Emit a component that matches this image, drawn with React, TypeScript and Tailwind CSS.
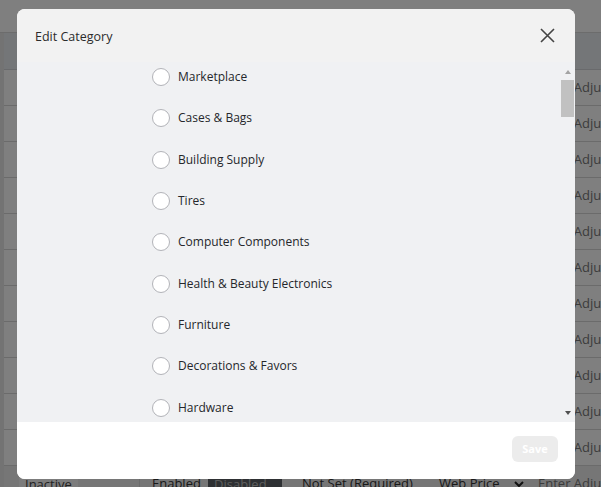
const categories = [
  'Marketplace',
  'Cases & Bags',
  'Building Supply',
  'Tires',
  'Computer Components',
  'Health & Beauty Electronics',
  'Furniture',
  'Decorations & Favors',
  'Hardware',
  'Toys & Games',
];

function TableRow({ last }: { last?: boolean }) {
  return (
    <div
      className={
        'flex h-[36px] items-center border-b border-[#d6d6d6] text-[13px] text-[#555] ' +
        (last ? 'bg-[#ececec]' : 'bg-white')
      }
    >
      <div className="flex h-full w-[136px] shrink-0 items-center border-r border-[#d6d6d6] pl-[15px]">
        <span className="rounded-sm bg-[#f8f8f8] px-[6px] leading-[20px] text-[#444]">Inactive</span>
      </div>
      <div className="flex w-[162px] shrink-0 items-center pl-[12px]">
        <span className="w-[56px] text-[#333]">Enabled</span>
        <span className="w-[74px] bg-[#5c6166] px-[6px] leading-[22px] text-[#bbb]">Disabled</span>
      </div>
      <div className="w-[137px] shrink-0 text-[#333]">Not Set (Required)</div>
      <div className="flex w-[99px] shrink-0 items-center pr-[13px]">
        <span className="text-[#333]">Web Price</span>
        <svg className="ml-auto" width="12" height="12" viewBox="0 0 12 12">
          <path d="M2 4l4 4 4-4" fill="none" stroke="#222" strokeWidth="2" />
        </svg>
      </div>
      <div className="whitespace-nowrap text-[#777]">Enter Adjustment</div>
    </div>
  );
}

export default function App() {
  return (
    <div className="relative h-[487px] w-[601px] overflow-hidden bg-white font-['Open_Sans',sans-serif]">
      <div className="h-[33px] border-b border-[#d8d8d8] bg-white" />
      <div className="flex">
        <div className="w-[4px] shrink-0 bg-[#e6e6e6]" />
        <div className="min-w-0 flex-1">
          <div className="h-[37px] border-b border-[#d2d4d8] bg-[#e9ecf1]" />
          {Array.from({ length: 12 }).map((_, i) => (
            <TableRow key={i} last={i === 11} />
          ))}
        </div>
      </div>

      <div className="absolute inset-0 bg-black/50 pl-[17px] pt-[9px]">
        <div className="flex h-[470px] w-[558px] flex-col overflow-hidden rounded-[8px] bg-white">
          <div className="flex h-[53px] items-center justify-between bg-[#f2f2f2] pl-[18px] pr-[20px]">
            <span className="mt-[3px] text-[12.5px] font-medium text-[#2b2b2b]">Edit Category</span>
            <svg width="15" height="15" viewBox="0 0 15 15">
              <path d="M1 1l13 13M14 1L1 14" stroke="#444" strokeWidth="1.6" fill="none" />
            </svg>
          </div>

          <div className="flex h-[360px] bg-[#f0f1f3]">
            <div className="flex flex-1 flex-col gap-[23.33px] overflow-hidden pl-[135px] pt-[6px]">
              {categories.map((c) => (
                <label key={c} className="flex h-[18px] shrink-0 items-center gap-[8px]">
                  <span className="h-[18px] w-[18px] shrink-0 rounded-full border-[1.5px] border-[#b2b3b8] bg-white" />
                  <span className="text-[12px] text-[#25272b]">{c}</span>
                </label>
              ))}
            </div>
            <div className="flex w-[15px] flex-col items-center pb-[7px] pt-[8px]">
              <div className="h-0 w-0 border-x-[3.5px] border-b-[4px] border-x-transparent border-b-[#a3a3a3]" />
              <div className="mt-[6px] h-[37px] w-[13px] bg-[#c1c1c1]" />
              <div className="flex-1" />
              <div className="h-0 w-0 border-x-[3.5px] border-t-[4px] border-x-transparent border-t-[#505050]" />
            </div>
          </div>

          <div className="flex flex-1 items-start justify-end bg-white pr-[17px] pt-[14px]">
            <button className="h-[26px] w-[46px] rounded-[6px] bg-[#ececec] text-[11px] font-bold text-white">
              Save
            </button>
          </div>
        </div>
      </div>
    </div>
  );
}
